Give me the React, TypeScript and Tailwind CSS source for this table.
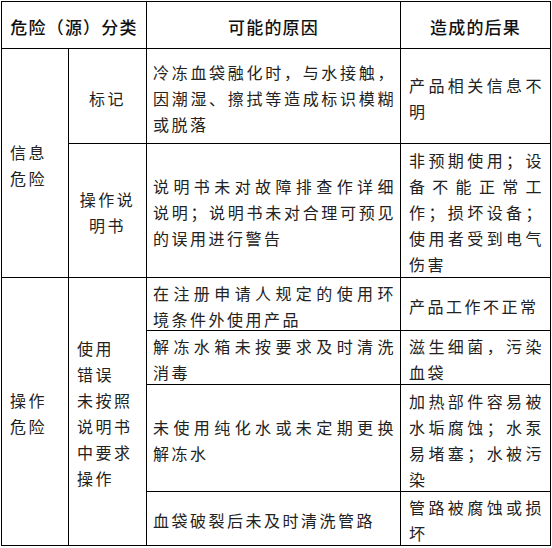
import React from "react";

const FONT = '"Noto Sans CJK SC", "Noto Sans", sans-serif';

type LinesProps = { lines: string[]; justify?: boolean };

function Lines({ lines, justify = true }: LinesProps) {
  return (
    <>
      {lines.map((l, i) => (
        <div
          key={i}
          className={
            justify && i < lines.length - 1
              ? "text-justify [text-align-last:justify]"
              : ""
          }
        >
          {l}
        </div>
      ))}
    </>
  );
}

const cell =
  "flex flex-col justify-center border-r border-b border-black text-[16px] leading-[26px] tracking-[2.5px] text-[#222] pt-[3px]";
const c3 = `${cell} pl-[6px] pr-[4px]`;
const c4 = `${cell} pl-[8px] pr-[6px]`;
const head =
  "flex items-center justify-center border-r border-b border-black text-[17px] font-medium tracking-[1.2px] text-[#111] pt-[3px]";

export default function App() {
  return (
    <div className="bg-white w-[552px] h-[548px]" style={{ fontFamily: FONT }}>
      <div className="ml-[1px] mt-[1px] w-[550px] grid grid-cols-[67px_78px_254px_150px] grid-rows-[47px_95px_134px_53px_54px_107px_54px] border-l border-t border-black">
        {/* header */}
        <div className={`${head} col-span-2`}>危险（源）分类</div>
        <div className={head}>可能的原因</div>
        <div className={head}>造成的后果</div>

        {/* 信息危险 */}
        <div className={`${cell} row-span-2 pl-[8px]`}>
          <Lines lines={["信息", "危险"]} justify={false} />
        </div>
        <div className={`${cell} items-center`}>
          <div>标记</div>
        </div>
        <div className={c3}>
          <Lines
            lines={[
              "冷冻血袋融化时，与水接触，",
              "因潮湿、擦拭等造成标识模糊",
              "或脱落",
            ]}
          />
        </div>
        <div className={c4}>
          <Lines lines={["产品相关信息不", "明"]} />
        </div>

        <div className={`${cell} items-center text-center`}>
          <div>操作说</div>
          <div>明书</div>
        </div>
        <div className={c3}>
          <Lines
            lines={[
              "说明书未对故障排查作详细",
              "说明；说明书未对合理可预见",
              "的误用进行警告",
            ]}
          />
        </div>
        <div className={c4}>
          <Lines
            lines={[
              "非预期使用；设",
              "备不能正常工",
              "作；损坏设备；",
              "使用者受到电气",
              "伤害",
            ]}
          />
        </div>

        {/* 操作危险 */}
        <div className={`${cell} row-span-4 pl-[8px]`}>
          <Lines lines={["操作", "危险"]} justify={false} />
        </div>
        <div className={`${cell} row-span-4 pl-[8px]`}>
          <Lines
            lines={["使用", "错误", "未按照", "说明书", "中要求", "操作"]}
            justify={false}
          />
        </div>
        <div className={c3}>
          <Lines
            lines={["在注册申请人规定的使用环", "境条件外使用产品"]}
          />
        </div>
        <div className={c4}>
          <Lines lines={["产品工作不正常"]} />
        </div>

        <div className={c3}>
          <Lines lines={["解冻水箱未按要求及时清洗", "消毒"]} />
        </div>
        <div className={c4}>
          <Lines lines={["滋生细菌，污染", "血袋"]} />
        </div>

        <div className={c3}>
          <Lines lines={["未使用纯化水或未定期更换", "解冻水"]} />
        </div>
        <div className={c4}>
          <Lines
            lines={[
              "加热部件容易被",
              "水垢腐蚀；水泵",
              "易堵塞；水被污",
              "染",
            ]}
          />
        </div>

        <div className={c3}>
          <Lines lines={["血袋破裂后未及时清洗管路"]} />
        </div>
        <div className={c4}>
          <Lines lines={["管路被腐蚀或损", "坏"]} />
        </div>
      </div>
    </div>
  );
}
